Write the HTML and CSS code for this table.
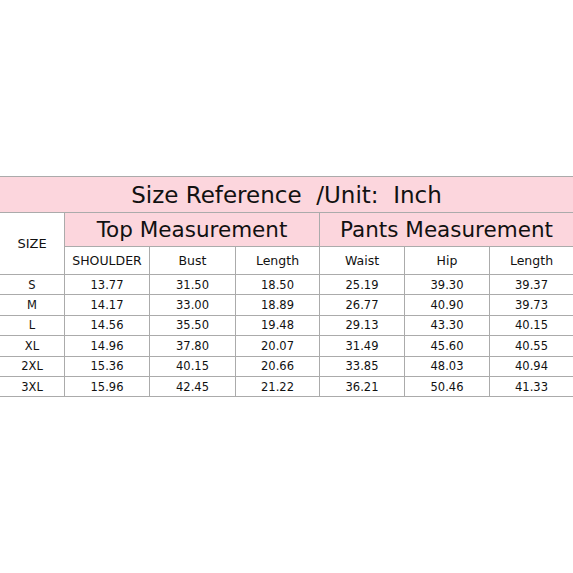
FILE: index.html
```html
<!DOCTYPE html>
<html>
<head>
<meta charset="utf-8">
<link rel="stylesheet" href="styles.css">
</head>
<body>
<div class="page">
<table class="sizes">
  <colgroup>
    <col class="c0"><col class="c1"><col class="c2"><col class="c3"><col class="c4"><col class="c5"><col class="c6">
  </colgroup>
  <tr class="title-row"><td colspan="7" class="pink title">Size Reference&nbsp; /Unit:&nbsp; Inch</td></tr>
  <tr class="group-row">
    <td rowspan="2" class="size-head">SIZE</td>
    <td colspan="3" class="pink group">Top Measurement</td>
    <td colspan="3" class="pink group">Pants Measurement</td>
  </tr>
  <tr class="sub-row">
    <td>SHOULDER</td><td>Bust</td><td>Length</td><td>Waist</td><td>Hip</td><td>Length</td>
  </tr>
  <tr class="data"><td>S</td><td>13.77</td><td>31.50</td><td>18.50</td><td>25.19</td><td>39.30</td><td>39.37</td></tr>
  <tr class="data"><td>M</td><td>14.17</td><td>33.00</td><td>18.89</td><td>26.77</td><td>40.90</td><td>39.73</td></tr>
  <tr class="data"><td>L</td><td>14.56</td><td>35.50</td><td>19.48</td><td>29.13</td><td>43.30</td><td>40.15</td></tr>
  <tr class="data"><td>XL</td><td>14.96</td><td>37.80</td><td>20.07</td><td>31.49</td><td>45.60</td><td>40.55</td></tr>
  <tr class="data"><td>2XL</td><td>15.36</td><td>40.15</td><td>20.66</td><td>33.85</td><td>48.03</td><td>40.94</td></tr>
  <tr class="data"><td>3XL</td><td>15.96</td><td>42.45</td><td>21.22</td><td>36.21</td><td>50.46</td><td>41.33</td></tr>
</table>
</div>
</body>
</html>
```
FILE: styles.css
```css
html, body { margin: 0; padding: 0; background: #fff; }
.page { padding-top: 176px; width: 573px; }
.sizes {
  border-collapse: collapse;
  table-layout: fixed;
  width: 574px;
  margin-left: -1px;
  font-family: "DejaVu Sans", sans-serif;
  color: #111;
}
.c0 { width: 65px; }
.c1 { width: 85px; }
.c2 { width: 86px; }
.c3 { width: 84px; }
.c4 { width: 85px; }
.c5 { width: 85px; }
.c6 { width: 84px; }
.sizes td {
  border: 1px solid #ababab;
  text-align: center;
  padding: 0;
  white-space: nowrap;
  overflow: hidden;
}
.pink { background: #fcd6dd; }
.title-row td { height: 35px; font-size: 23px; }
.group-row td { height: 33px; font-size: 21.5px; }
.group-row .size-head { font-size: 13px; }
.sub-row td { height: 27px; font-size: 12.5px; }
.data td { height: 19.4px; font-size: 11.5px; }
```
